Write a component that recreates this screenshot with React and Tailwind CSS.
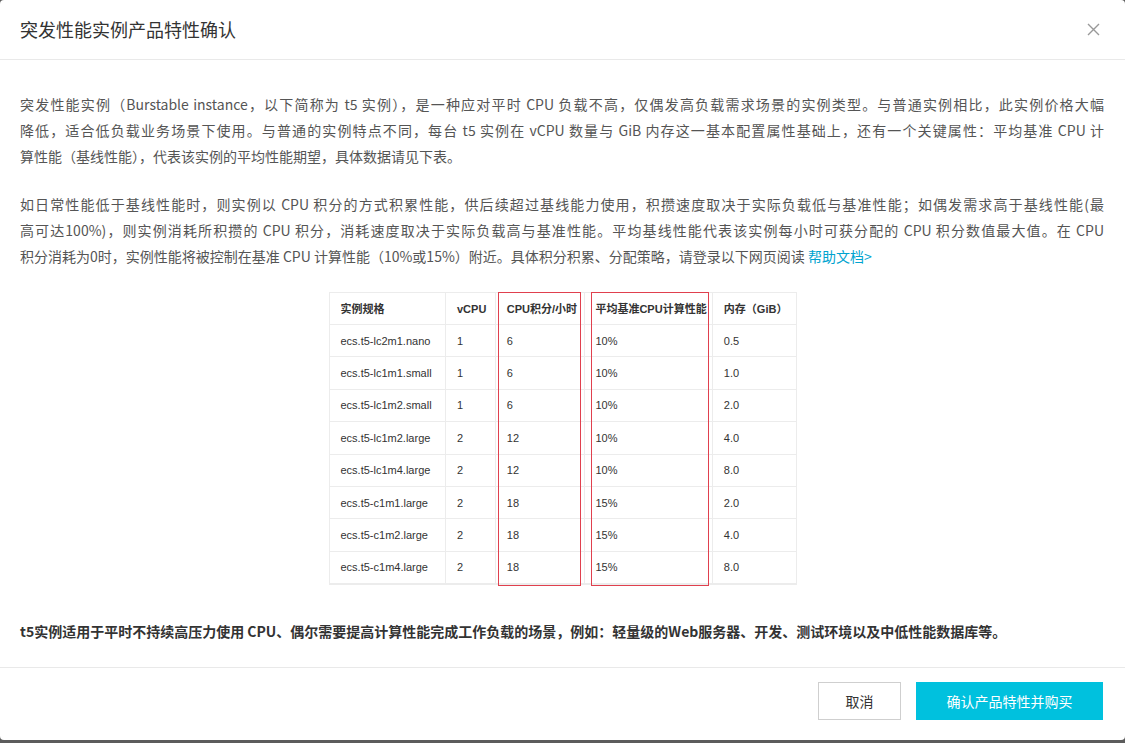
import React from "react";

const rows = [
  ["ecs.t5-lc2m1.nano", "1", "6", "10%", "0.5"],
  ["ecs.t5-lc1m1.small", "1", "6", "10%", "1.0"],
  ["ecs.t5-lc1m2.small", "1", "6", "10%", "2.0"],
  ["ecs.t5-lc1m2.large", "2", "12", "10%", "4.0"],
  ["ecs.t5-lc1m4.large", "2", "12", "10%", "8.0"],
  ["ecs.t5-c1m1.large", "2", "18", "15%", "2.0"],
  ["ecs.t5-c1m2.large", "2", "18", "15%", "4.0"],
  ["ecs.t5-c1m4.large", "2", "18", "15%", "8.0"],
];

const headings = ["实例规格", "vCPU", "CPU积分/小时", "平均基准CPU计算性能", "内存（GiB）"];
const colW = ["w-[117px]", "w-[50px]", "w-[90px]", "w-[128px]", "w-[83px]"];
const padL = ["pl-[11px]", "pl-[11px]", "pl-[11px]", "pl-[10px]", "pl-[11px]"];

const SpecTable = () => (
  <div className="relative mx-auto mt-[23px] w-[468px] border border-[#ececec] font-['Liberation_Sans','Noto_Sans_CJK_SC',sans-serif] text-[11px] text-[#333]">
    <div className="flex h-[32px] items-center border-b border-[#ececec] font-bold">
      {headings.map((h, i) => (
        <div key={h} className={`${colW[i]} ${padL[i]} flex h-full items-center border-r border-[#ececec] last:border-r-0`}>
          {h}
        </div>
      ))}
    </div>
    {rows.map((r, ri) => (
      <div key={ri} className="flex h-[32.4px] items-center border-b border-[#ececec] last:border-b-0">
        {r.map((c, i) => (
          <div key={i} className={`${colW[i]} ${padL[i]} flex h-full items-center border-r border-[#ececec] last:border-r-0`}>
            {c}
          </div>
        ))}
      </div>
    ))}
    {/* red annotation boxes */}
    <div className="absolute top-[-1px] bottom-[-2px] left-[168px] w-[83px] border-[1.5px] border-[#e0404e]" />
    <div className="absolute top-[-1px] bottom-[-2px] left-[261px] w-[118px] border-[1.5px] border-[#e0404e]" />
  </div>
);

const full = "[text-align-last:justify]";

export default function App() {
  return (
    <div className="h-[743px] w-[1125px] bg-[#5c5c5c] font-['Noto_Sans_CJK_SC',sans-serif]">
      <div className="flex h-[740px] flex-col rounded-[4px] bg-white">
        {/* header */}
        <div className="flex h-[60px] items-center justify-between border-b border-[#e9e9e9] px-[20px]">
          <h1 className="text-[18px] text-[#333]">突发性能实例产品特性确认</h1>
          <button className="mr-[5px] text-[#999]">
            <svg width="13" height="13" viewBox="0 0 13 13" fill="none" stroke="currentColor" strokeWidth="1.4">
              <path d="M1 1l11 11M12 1L1 12" />
            </svg>
          </button>
        </div>

        {/* body */}
        <div className="flex-1 px-[20px] pt-[31px] text-[14px] leading-[26px] text-[#555]">
          <div className="w-[1084px] whitespace-nowrap">
            <div className={full}>突发性能实例（Burstable instance，以下简称为 t5 实例），是一种应对平时 CPU 负载不高，仅偶发高负载需求场景的实例类型。与普通实例相比，此实例价格大幅</div>
            <div className={full}>降低，适合低负载业务场景下使用。与普通的实例特点不同，每台 t5 实例在 vCPU 数量与 GiB 内存这一基本配置属性基础上，还有一个关键属性：平均基准 CPU 计</div>
            <div>算性能（基线性能），代表该实例的平均性能期望，具体数据请见下表。</div>
          </div>
          <div className="mt-[22px] w-[1084px] whitespace-nowrap">
            <div className={full}>如日常性能低于基线性能时，则实例以 CPU 积分的方式积累性能，供后续超过基线能力使用，积攒速度取决于实际负载低与基准性能；如偶发需求高于基线性能(最</div>
            <div className={full}>高可达100%)，则实例消耗所积攒的 CPU 积分，消耗速度取决于实际负载高与基准性能。平均基线性能代表该实例每小时可获分配的 CPU 积分数值最大值。在 CPU</div>
            <div>
              积分消耗为0时，实例性能将被控制在基准 CPU 计算性能（10%或15%）附近。具体积分积累、分配策略，请登录以下网页阅读{" "}
              <a className="text-[#00a3cf]">帮助文档&gt;</a>
            </div>
          </div>

          <SpecTable />

          <p className="mt-[33px] font-bold text-[#333]">
            t5实例适用于平时不持续高压力使用 CPU、偶尔需要提高计算性能完成工作负载的场景，例如：轻量级的Web服务器、开发、测试环境以及中低性能数据库等。
          </p>
        </div>

        {/* footer */}
        <div className="flex h-[73px] items-start justify-end gap-[15px] border-t border-[#e9e9e9] px-[22px] pt-[14px]">
          <button className="h-[38px] w-[83px] border border-[#cfcfcf] text-[14px] text-[#333]">取消</button>
          <button className="h-[38px] w-[187px] bg-[#00c1de] text-[14px] text-white">确认产品特性并购买</button>
        </div>
      </div>
    </div>
  );
}
